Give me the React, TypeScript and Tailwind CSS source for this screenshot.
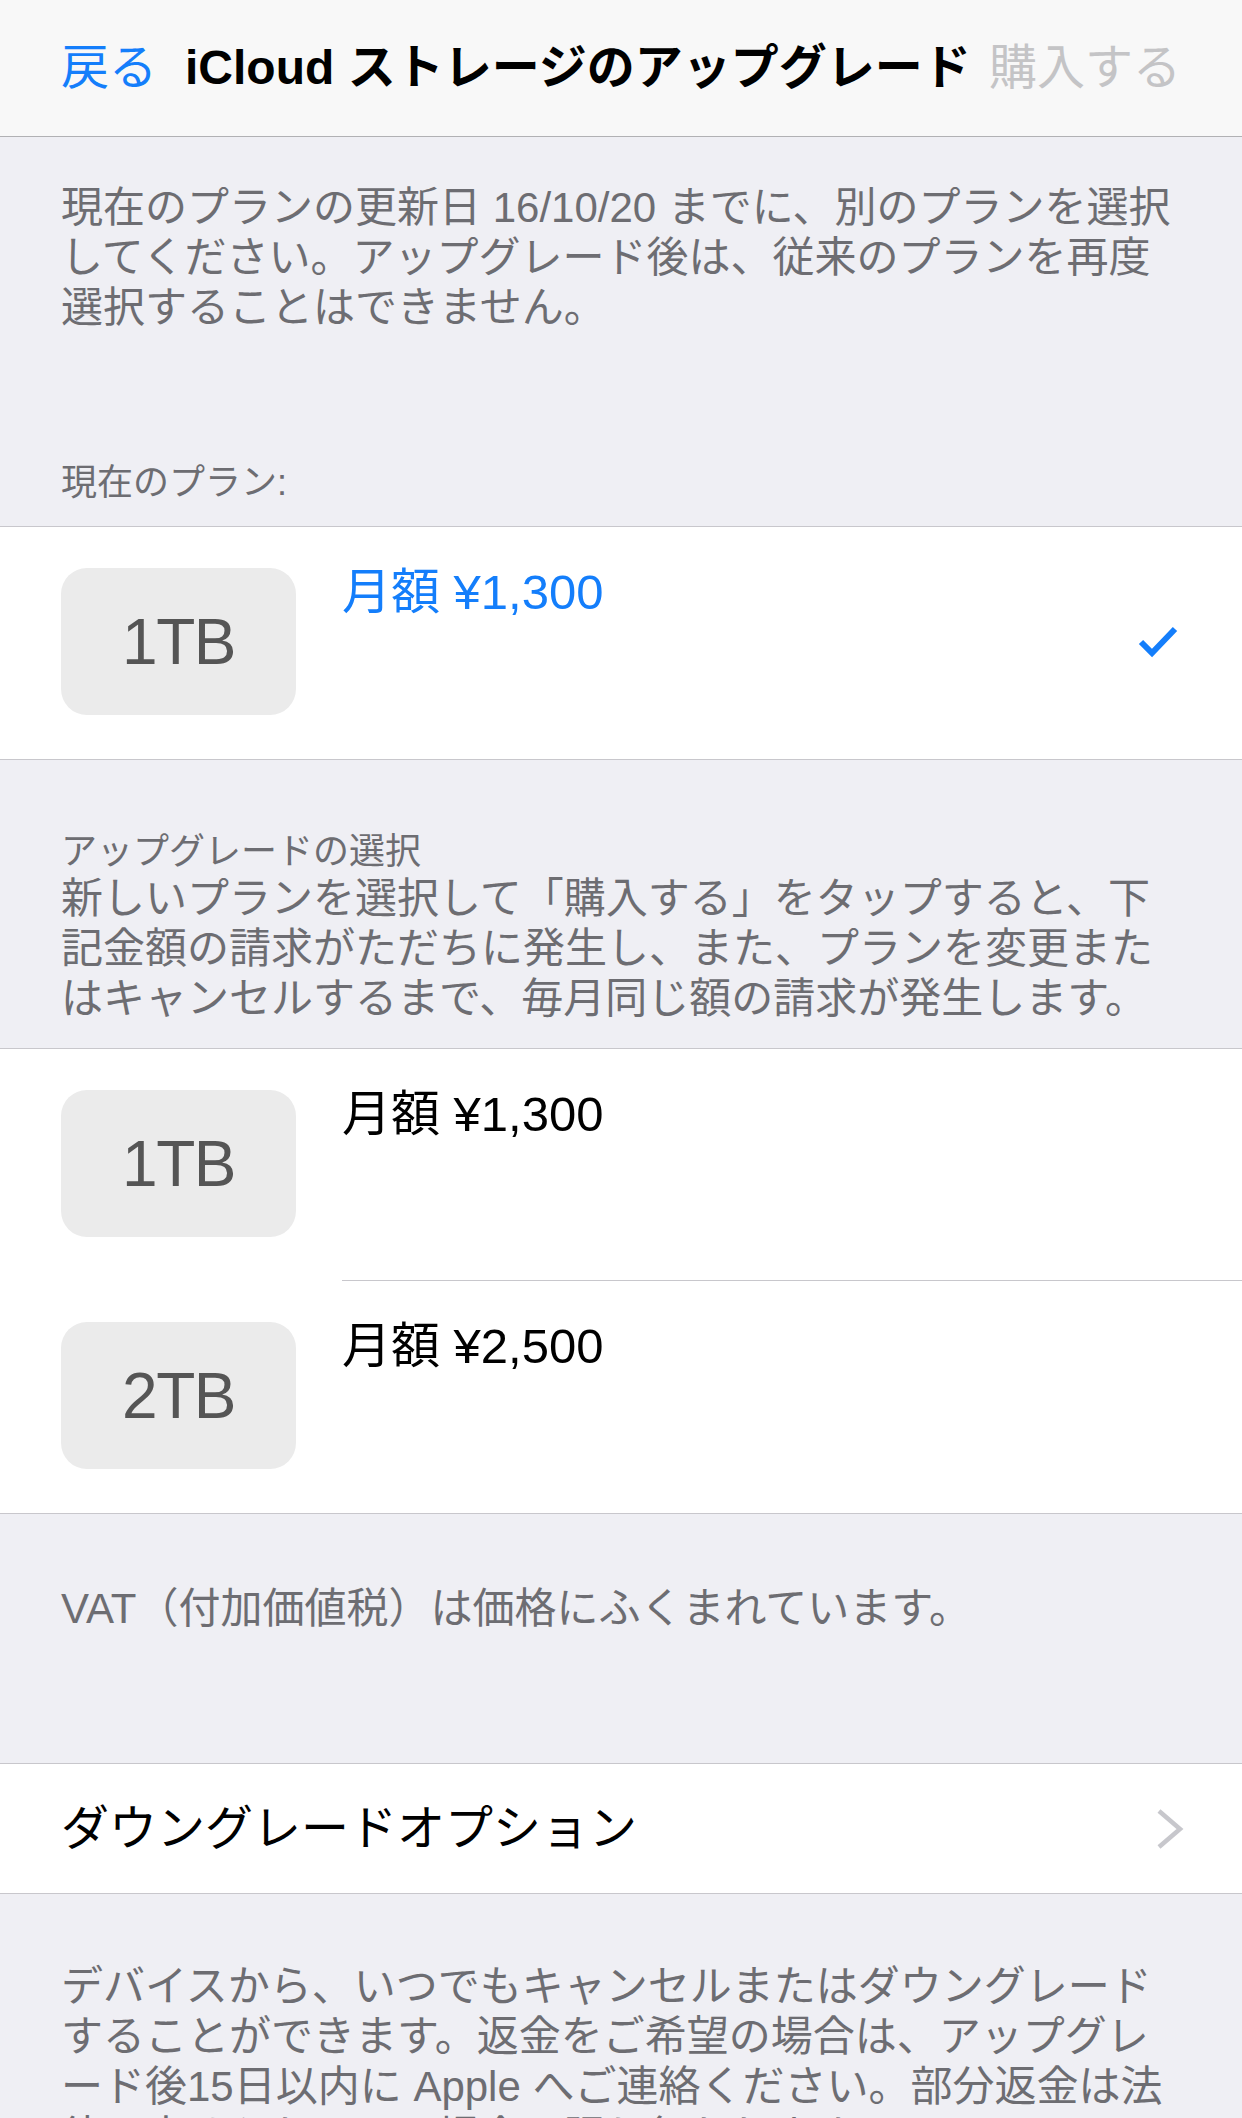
import React from "react";

const FONT = { fontFamily: '"Liberation Sans", "Noto Sans CJK JP", sans-serif' };

function Tile({ label }: { label: string }) {
  return (
    <div className="w-[235px] h-[147px] shrink-0 rounded-[26px] bg-[#ebebeb] flex items-center justify-center">
      <span className="text-[64px] leading-none text-[#555555] tracking-[-1.5px]">{label}</span>
    </div>
  );
}

function PlanRow({
  label,
  price,
  selected,
  divider,
}: {
  label: string;
  price: string;
  selected?: boolean;
  divider?: boolean;
}) {
  return (
    <div className="relative flex items-start pl-[61px] pr-[64px] pt-[41px] pb-[44px]">
      <Tile label={label} />
      <div
        className={
          "ml-[46px] text-[49px] leading-[48px] whitespace-nowrap " +
          (selected ? "text-[#147efb]" : "text-black")
        }
      >
        {price}
      </div>
      <div className="flex-1" />
      {selected && (
        <div className="self-center">
          <svg width="40" height="32" viewBox="0 0 40 32">
            <polyline
              points="3,16 14,27 37,3"
              fill="none"
              stroke="#147efb"
              strokeWidth="6"
              strokeLinejoin="miter"
            />
          </svg>
        </div>
      )}
      {divider && <div className="absolute left-[342px] right-0 bottom-0 h-px bg-[#c8c7cc]" />}
    </div>
  );
}

export default function App() {
  return (
    <div className="w-[1242px] h-[2118px] overflow-hidden bg-[#efeff4]" style={FONT}>
      {/* Nav */}
      <div className="h-[137px] bg-[#f8f8f8] border-b border-[#b1b1b4] flex items-center pl-[61px] pr-[61px] whitespace-nowrap">
        <span className="text-[48px] leading-none text-[#147efb]">戻る</span>
        <span className="ml-[28px] text-[48px] leading-none font-semibold text-black">
          iCloud ストレージのアップグレード
        </span>
        <div className="flex-1" />
        <span className="text-[48px] leading-none text-[#c4c4c6]">購入する</span>
      </div>

      {/* Intro */}
      <div className="pt-[46px] pb-[21px] px-[61px] text-[#6d6d72]">
        <p className="text-[42px] leading-[50px] whitespace-nowrap">
          現在のプランの更新日 16/10/20 までに、別のプランを選択
          <br />
          してください。アップグレード後は、従来のプランを再度
          <br />
          選択することはできません。
        </p>
        <p className="mt-[128px] text-[36px] leading-[44px]">現在のプラン:</p>
      </div>

      {/* Current plan */}
      <div className="bg-white border-y border-[#c8c7cc]">
        <PlanRow label="1TB" price="月額 ¥1,300" selected />
      </div>

      {/* Upgrade header */}
      <div className="pt-[70px] pb-[24px] px-[61px] text-[#6d6d72]">
        <p className="text-[36px] leading-[44px]">アップグレードの選択</p>
        <p className="text-[42px] leading-[50px] whitespace-nowrap">
          新しいプランを選択して「購入する」をタップすると、下
          <br />
          記金額の請求がただちに発生し、また、プランを変更また
          <br />
          はキャンセルするまで、毎月同じ額の請求が発生します。
        </p>
      </div>

      {/* Plan options */}
      <div className="bg-white border-y border-[#c8c7cc]">
        <PlanRow label="1TB" price="月額 ¥1,300" divider />
        <PlanRow label="2TB" price="月額 ¥2,500" />
      </div>

      {/* VAT */}
      <div className="pt-[70px] pb-[129px] px-[61px] text-[#6d6d72]">
        <p className="text-[42px] leading-[50px] whitespace-nowrap">
          VAT（付加価値税）は価格にふくまれています。
        </p>
      </div>

      {/* Downgrade options */}
      <div className="bg-white border-y border-[#c8c7cc] h-[131px] flex items-center pl-[61px] pr-[58px]">
        <span className="text-[48px] leading-[48px] text-black">ダウングレードオプション</span>
        <div className="flex-1" />
        <svg width="28" height="40" viewBox="0 0 28 40">
          <polyline
            points="3,2 24,20 3,38"
            fill="none"
            stroke="#c7c7cc"
            strokeWidth="4.5"
            strokeLinejoin="miter"
          />
        </svg>
      </div>

      {/* Footer */}
      <div className="pt-[68px] px-[61px] text-[#6d6d72]">
        <p className="text-[42px] leading-[50px] whitespace-nowrap">
          デバイスから、いつでもキャンセルまたはダウングレード
          <br />
          することができます。返金をご希望の場合は、アップグレ
          <br />
          ード後15日以内に Apple へご連絡ください。部分返金は法
          <br />
          律で定められている場合に限り行われます。
        </p>
      </div>
    </div>
  );
}
